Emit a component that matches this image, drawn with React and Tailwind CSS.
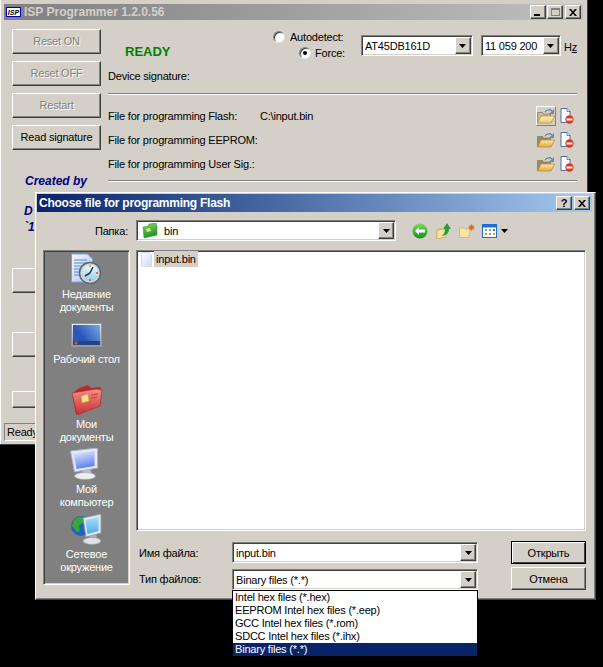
import React from 'react';

const RAISED = 'border border-t-white border-l-white border-r-[#404040] border-b-[#404040] shadow-[inset_-1px_-1px_0_#808080]';
const SUNKEN = 'border border-t-[#808080] border-l-[#808080] border-r-white border-b-white shadow-[inset_1px_1px_0_#404040,inset_-1px_-1px_0_#d4d0c8]';

const Arrow = () => (
  <svg width="7" height="4" viewBox="0 0 7 4"><path d="M0 0h7L3.5 4z" fill="#000" /></svg>
);

const Grad = ({ id, from, to, x2 = 0, y2 = 1 }) => (
  <defs>
    <linearGradient id={id} x1="0" y1="0" x2={x2} y2={y2}>
      <stop offset="0" stopColor={from} />
      <stop offset="1" stopColor={to} />
    </linearGradient>
  </defs>
);

const Combo = ({ value, className = '', children }) => (
  <div className={`relative flex items-center bg-white h-[21px] ${SUNKEN} ${className}`}>
    <span className="flex-1 pl-[3px] whitespace-nowrap">{value}</span>
    <div className={`w-[16px] h-[17px] mr-[1px] flex items-center justify-center bg-[#d4d0c8] ${RAISED}`}>
      <Arrow />
    </div>
    {children}
  </div>
);

const CtlButton = ({ className = '', children }) => (
  <div className={`w-[16px] h-[14px] flex items-center justify-center bg-[#d4d0c8] ${RAISED} ${className}`}>
    {children}
  </div>
);

const CloseGlyph = () => (
  <svg width="8" height="7" viewBox="0 0 8 7"><path d="M0 0h2l2 2.3L6 0h2L5 3.5 8 7H6L4 4.7 2 7H0l3-3.5z" fill="#000" /></svg>
);

const WinButton = ({ label, disabled, className = '' }) => (
  <div className={`w-[89px] h-[25px] pb-[1px] flex items-center justify-center bg-[#d4d0c8] ${RAISED} ${className}`}>
    <span className={disabled ? 'text-[#808080] [text-shadow:1px_1px_0_#fff]' : ''}>{label}</span>
  </div>
);

const FolderIcon = ({ pale }) => (
  <svg width="18" height="16" viewBox="0 0 18 16">
    <Grad id={pale ? 'folderPale' : 'folderGold'} from={pale ? '#fbeec4' : '#fbe9a8'} to={pale ? '#eec97a' : '#e8a93a'} />
    <path d="M0.5 4.5h5l1 1.5h7v8.5H0.5z" fill={pale ? '#c9b98c' : '#9a8a60'} stroke="#86795a" strokeWidth="0.7" />
    <path d="M4 8h13.5l-3.5 7H0.5z" fill={`url(#${pale ? 'folderPale' : 'folderGold'})`} stroke="#a88a3c" strokeWidth="0.7" />
    <path d="M8 4C10 1.500 13 1 15 3" fill="none" stroke="#6f86a8" strokeWidth="1.3" />
    <path d="M17 1v5h-5z" fill="#6f86a8" />
  </svg>
);

const NoFileIcon = () => (
  <svg width="14" height="16" viewBox="0 0 14 16">
    <path d="M1 0.500h6l3 3v11H1z" fill="#fff" stroke="#3a5f9e" strokeWidth="0.9" />
    <path d="M7 0.500v3h3" fill="#dbe6f5" stroke="#3a5f9e" strokeWidth="0.7" />
    <circle cx="9.500" cy="11.500" r="4.200" fill="#d63a1e" />
    <rect x="6.500" y="10.500" width="6" height="2" fill="#fff" />
  </svg>
);

const FileRow = ({ label, path, active }) => (
  <div className="flex items-center h-[24px]">
    <span className="w-[152px] whitespace-nowrap">{label}</span>
    <span className="flex-1">{path}</span>
    <div className={`w-[20px] h-[20px] flex items-center justify-center ${active ? 'border border-t-white border-l-white border-r-[#808080] border-b-[#808080]' : ''}`}>
      <FolderIcon pale={active} />
    </div>
    <div className="ml-[4px] mr-[3px] w-[14px] flex justify-center"><NoFileIcon /></div>
  </div>
);

const Separator = () => <div className="h-[2px] border-t border-t-[#808080] border-b border-b-white" />;

const Radio = ({ checked }) => (
  <div className="w-[12px] h-[12px] rounded-full bg-white border border-t-[#808080] border-l-[#808080] border-r-[#e8e6e0] border-b-[#e8e6e0] flex items-center justify-center shadow-[inset_1px_1px_0_#404040]">
    {checked && <div className="w-[4px] h-[4px] rounded-full bg-black" />}
  </div>
);

const RecentIcon = () => (
  <svg width="32" height="32" viewBox="0 0 32 32">
    <Grad id="recentDoc" from="#f4f8ff" to="#a9c4ee" x2={1} y2={1} />
    <Grad id="recentFace" from="#eafaff" to="#8fd0ee" />
    <path d="M0.500 1h16l5 5v23H0.500z" fill="url(#recentDoc)" stroke="#7f9fd8" />
    <path d="M3 7h13M3 10h13M3 13h11M3 16h9M3 19h6M3 22h6" stroke="#5c86d2" strokeWidth="1.100" />
    <circle cx="19" cy="20" r="10.500" fill="#cdd3d8" stroke="#5f676d" strokeWidth="1.500" />
    <circle cx="19" cy="20" r="8" fill="url(#recentFace)" />
    <path d="M19 20l-5 3M19 20l3-6" stroke="#333" strokeWidth="1.500" />
    <circle cx="26" cy="20" r="1" fill="#d8502a" />
    <circle cx="19" cy="27" r="1" fill="#d8502a" />
    <circle cx="19" cy="13" r="1" fill="#d8902a" />
  </svg>
);

const DesktopIcon = () => (
  <svg width="32" height="24" viewBox="0 0 32 24">
    <Grad id="deskFrame" from="#e8ecf4" to="#8d97ab" />
    <Grad id="deskScreen" from="#2a57b8" to="#8dbdf5" x2={1} y2={-0.5} />
    <rect x="0.500" y="0.500" width="30" height="23" fill="url(#deskFrame)" stroke="#8c97a3" />
    <rect x="2" y="2" width="27" height="17" fill="url(#deskScreen)" />
    <rect x="2" y="18" width="27" height="4" fill="#27437a" />
    <rect x="3.500" y="18.500" width="3" height="3" fill="#d8502a" />
  </svg>
);

const DocsIcon = () => (
  <svg width="32" height="30" viewBox="0 0 32 30">
    <Grad id="docsFront" from="#f48f86" to="#c92f2f" />
    <path d="M8 3l9-3 3 3 9-1 2 4-2 15-24 8L1 9z" fill="#b32b2b" />
    <path d="M1 8l24-4 6 1-2 16-23 9z" fill="url(#docsFront)" stroke="#a82a28" strokeWidth="0.600" />
    <path d="M10 11l7-2 1 7-7 2z" fill="#f7e08a" stroke="#b4942e" strokeWidth="0.500" />
    <path d="M20 10l7-1M20 13l6-1" stroke="#a83a36" strokeWidth="0.800" />
  </svg>
);

const ComputerIcon = () => (
  <svg width="32" height="32" viewBox="0 0 32 32">
    <Grad id="pcScreen" from="#eef0ff" to="#5f82f0" x2={0.3} y2={1} />
    <path d="M0.500 3l27-3v20l-23 4z" fill="#e4e8f4" stroke="#aab2c6" />
    <path d="M3.500 5.500l21-2.500v15l-18 3z" fill="url(#pcScreen)" />
    <path d="M12 23l8-2 2 5h-9z" fill="#b9bec8" />
    <ellipse cx="15" cy="28" rx="10.500" ry="3.500" fill="#eceef2" stroke="#9aa0a8" strokeWidth="0.600" />
  </svg>
);

const NetworkIcon = () => (
  <svg width="32" height="32" viewBox="0 0 32 32">
    <Grad id="netScreen" from="#a8e0fb" to="#4ea8ec" />
    <circle cx="10" cy="13" r="10" fill="#1f63bd" />
    <path d="M3 7c4-4 8-4 10-2l-1 5-4 2 1 6-3 1-5-6z" fill="#3ba53b" />
    <path d="M12 5l18-4v19l-15 4z" fill="#dfe6f0" stroke="#8c97a3" strokeWidth="0.800" />
    <path d="M14.500 7l13-3v14l-11 3z" fill="url(#netScreen)" />
    <path d="M19 23l6-2 1 5h-7z" fill="#a8adb6" />
    <ellipse cx="21" cy="28" rx="9" ry="3.500" fill="#dfe2e7" stroke="#8f959e" strokeWidth="0.600" />
  </svg>
);

const places = [
  { icon: <RecentIcon />, lines: ['Недавние', 'документы'], h: 'h-[70px]', gap: 'mt-[3px]' },
  { icon: <DesktopIcon />, lines: ['Рабочий стол'], h: 'h-[62px]', gap: 'mt-[6px]' },
  { icon: <DocsIcon />, lines: ['Мои', 'документы'], h: 'h-[63px]', gap: 'mt-[3px]' },
  { icon: <ComputerIcon />, lines: ['Мой', 'компьютер'], h: 'h-[65px]', gap: 'mt-[3px]' },
  { icon: <NetworkIcon />, lines: ['Сетевое', 'окружение'], h: 'h-[66px]', gap: 'mt-[3px]' },
];

const fileTypes = [
  'Intel hex files (*.hex)',
  'EEPROM Intel hex files (*.eep)',
  'GCC Intel hex files (*.rom)',
  'SDCC Intel hex files (*.ihx)',
  'Binary files (*.*)',
];

const MainWindow = () => (
  <div className="absolute left-0 top-0 w-[588px] h-[445px] bg-[#d4d0c8] p-[4px] border-r border-b border-r-[#404040] border-b-[#404040] shadow-[inset_1px_0_0_#fff]">
    <div className="h-[16px] flex items-center bg-gradient-to-r from-[#808080] to-[#c0c0c0] pl-[2px] pr-[2px]">
      <div className="w-[15px] h-[10px] bg-white border border-[#0000c0] flex items-center justify-center">
        <span className="text-[7px] leading-none font-bold italic tracking-normal text-black">ISP</span>
      </div>
      <span className="ml-[3px] flex-1 font-bold text-[#d4d0c8] text-[12px] tracking-normal">ISP Programmer 1.2.0.56</span>
      <CtlButton>
        <div className="w-[6px] h-[2px] bg-black mt-[6px] mr-[2px]" />
      </CtlButton>
      <CtlButton className="ml-[1px]">
        <div className="w-[9px] h-[8px] border border-t-2 border-[#808080]" />
      </CtlButton>
      <CtlButton className="ml-[2px]"><CloseGlyph /></CtlButton>
    </div>

    <div className="flex">
      <div className="w-[104px] pl-[8px] pt-[9px] flex flex-col">
        <div className="flex flex-col gap-[7px]">
          <WinButton label="Reset ON" disabled />
          <WinButton label="Reset OFF" disabled />
          <WinButton label="Restart" disabled />
          <WinButton label="Read signature" />
        </div>
        <div className="mt-[23px] ml-[13px] font-bold italic text-[#000080] text-[12px] leading-[16px] tracking-normal">Created by</div>
        <div className="mt-[14px] ml-[12px] font-bold italic text-[#000080] text-[12px] leading-[16px] tracking-normal">D</div>
        <div className="ml-[12px] font-bold italic text-[#000080] text-[12px] leading-[16px] tracking-normal">`1</div>
        <div className={`mt-[33px] w-[89px] h-[25px] bg-[#d4d0c8] ${RAISED}`} />
        <div className={`mt-[39px] w-[89px] h-[25px] bg-[#d4d0c8] ${RAISED}`} />
        <div className={`mt-[34px] w-[89px] h-[17px] bg-[#d4d0c8] ${RAISED}`} />
      </div>

      <div className="w-[469px] pt-[9px]">
        <div className="flex h-[33px]">
          <div className="w-[165px] pl-[17px] pt-[15px] text-[#008000] font-bold text-[13px] leading-[16px] tracking-normal">READY</div>
          <div className="w-[88px] flex flex-col">
            <div className="flex items-center gap-[5px] h-[16px]">
              <Radio />
              <span>Autodetect:</span>
            </div>
            <div className="flex items-center gap-[4px] h-[16px] ml-[26px]">
              <Radio checked />
              <span>Force:</span>
            </div>
          </div>
          <Combo value="AT45DB161D" className="w-[112px] mt-[6px]" />
          <Combo value="11 059 200" className="w-[80px] ml-[8px] mt-[6px]" />
          <span className="ml-[3px] mt-[11px]">H<span className="underline">z</span></span>
        </div>
        <div className="mt-[6px] h-[16px] flex items-center">Device signature:</div>
        <div className="mt-[9px]"><Separator /></div>
        <div className="mt-[9px] flex flex-col">
          <FileRow label="File for programming Flash:" path="C:\input.bin" active />
          <FileRow label="File for programming EEPROM:" />
          <FileRow label="File for programming User Sig.:" />
        </div>
        <div className="mt-[4px]"><Separator /></div>
      </div>
    </div>

    <div className="absolute left-[4px] top-[423px] w-[300px] h-[18px] flex items-center pl-[2px] border border-t-[#808080] border-l-[#808080] border-r-white border-b-white">Ready</div>
  </div>
);

const FileDialog = () => (
  <div className="absolute left-[35px] top-[192px] w-[561px] h-[408px] bg-[#d4d0c8] pt-[1px] pl-[1px] pr-[3px] border border-t-white border-l-white border-r-[#404040] border-b-[#404040] shadow-[inset_-1px_-1px_0_#808080]">
    <div className="h-[18px] flex items-center bg-gradient-to-r from-[#0a246a] to-[#a6caf0] pl-[2px] pr-[2px]">
      <span className="flex-1 font-bold text-white text-[12px] tracking-[-0.25px]">Choose file for programming Flash</span>
      <CtlButton>
        <span className="font-bold text-[11px] leading-none">?</span>
      </CtlButton>
      <CtlButton className="ml-[2px]"><CloseGlyph /></CtlButton>
    </div>

    <div className="flex items-center mt-[8px] h-[21px]">
      <span className="w-[91px] text-right">Папка:</span>
      <Combo value={(
        <span className="flex items-center gap-[6px] pl-[2px]">
          <svg width="16" height="16" viewBox="0 0 16 16">
            <Grad id="binFolder" from="#8fdc5c" to="#1f8f2a" x2={0.3} y2={1} />
            <path d="M1 4l5-1 1-2 7-1 1 3v9l-13 3z" fill="url(#binFolder)" stroke="#2a8a2a" strokeWidth="0.500" />
            <path d="M4 6l4-1 1 3-4 1z" fill="#d8e88a" />
          </svg>
          bin
        </span>
      )} className="ml-[8px] w-[260px]" />
      <div className="ml-[16px] flex items-center">
        <svg width="16" height="16" viewBox="0 0 16 16">
          <Grad id="backBall" from="#7fdc5a" to="#0f8f1f" />
          <circle cx="8" cy="8" r="7.500" fill="url(#backBall)" />
          <path d="M3 8l4-4v2.500h6v3H7V12z" fill="#fff" />
        </svg>
        <svg className="ml-[8px]" width="15" height="16" viewBox="0 0 15 16">
          <path d="M0.500 6l5-1v9l-5 2z" fill="#d8b85c" />
          <path d="M1 7l9-1v8l-9 2z" fill="#f7e6a2" stroke="#c9a44e" strokeWidth="0.700" />
          <path d="M5 13c3-1 4-4 4-7H7l4-6 4 6h-2c0 4-3 7-8 7z" fill="#2f9b35" />
        </svg>
        <svg className="ml-[8px]" width="16" height="14" viewBox="0 0 16 14">
          <path d="M0.500 4h5l1 1h5l-2 8.500H0.500z" fill="#f7e6a2" stroke="#d0ac56" strokeWidth="0.700" />
          <circle cx="12.500" cy="3.500" r="2.300" fill="#e8622a" />
          <path d="M12.500 0v7M9 3.500h7M10 1l5 5M15 1l-5 5" stroke="#e8622a" strokeWidth="0.600" />
        </svg>
        <svg className="ml-[7px]" width="15" height="14" viewBox="0 0 15 14">
          <rect x="0.500" y="0.500" width="14" height="13" fill="#fff" stroke="#1c6fd6" />
          <rect x="0.500" y="0.500" width="14" height="3" fill="#1c6fd6" />
          <rect x="3" y="5" width="2" height="2" fill="#8a9ac0" />
          <rect x="7" y="5" width="2" height="2" fill="#8a9ac0" />
          <rect x="11" y="5" width="2" height="2" fill="#2f9b35" />
          <rect x="3" y="9" width="2" height="2" fill="#e8882a" />
          <rect x="7" y="9" width="2" height="2" fill="#8a9ac0" />
          <rect x="11" y="9" width="2" height="2" fill="#e8a02a" />
        </svg>
        <div className="ml-[4px]"><Arrow /></div>
      </div>
    </div>

    <div className="flex mt-[9px] pl-[6px]">
      <div className={`w-[87px] h-[335px] bg-[#808080] flex flex-col items-center pt-[2px] text-white ${SUNKEN}`}>
        {places.map(item => (
          <div key={item.lines[0]} className={`flex flex-col items-center ${item.h}`}>
            {item.icon}
            <div className={`${item.gap} text-center leading-[13px]`}>
              {item.lines.map(line => <div key={line}>{line}</div>)}
            </div>
          </div>
        ))}
      </div>

      <div className="ml-[6px] w-[450px]">
        <div className={`h-[281px] bg-white px-[4px] ${SUNKEN}`}>
          <div className="flex items-center h-[16px]">
            <svg width="12" height="15" viewBox="0 0 12 15">
              <Grad id="binFile" from="#ffffff" to="#c8daf4" x2={1} y2={1} />
              <path d="M0.500 0.500h8l2 2v12h-10z" fill="url(#binFile)" stroke="#cfdcf0" />
            </svg>
            <span className="ml-[1px] px-[2px] h-[16px] flex items-center bg-[#d4d0c8]">input.bin</span>
          </div>
        </div>

        <div className="flex mt-[10px]">
          <div className="w-[96px] pl-[3px] flex flex-col">
            <span className="h-[21px] mt-[1px] flex items-center">Имя файла:</span>
            <span className="h-[21px] mt-[5px] flex items-center">Тип файлов:</span>
          </div>
          <div className="w-[246px] flex flex-col gap-[6px] pt-[1px]">
            <Combo value="input.bin" />
            <Combo value="Binary files (*.*)">
              <div className="absolute left-[-1px] top-[20px] w-[246px] h-[67px] bg-white border border-black flex flex-col">
                {fileTypes.map(type => (
                  <div key={type} className={`h-[13px] pl-[2px] leading-[13px] whitespace-nowrap ${type.startsWith('Binary') ? 'bg-[#0a246a] text-white' : 'text-black'}`}>{type}</div>
                ))}
              </div>
            </Combo>
          </div>
          <div className="ml-[33px] flex flex-col">
            <div className="w-[75px] h-[23px] flex items-center justify-center bg-[#d4d0c8] border border-black shadow-[inset_1px_1px_0_#fff,inset_-1px_-1px_0_#404040]">Открыть</div>
            <div className={`mt-[3px] w-[75px] h-[23px] flex items-center justify-center bg-[#d4d0c8] ${RAISED}`}>Отмена</div>
          </div>
        </div>
      </div>
    </div>
  </div>
);

export default function App() {
  return (
    <div className="relative w-[603px] h-[667px] bg-black overflow-hidden font-['Liberation_Sans',Arial,sans-serif] text-[11px] leading-[14px] tracking-[-0.2px] text-black">
      <MainWindow />
      <FileDialog />
    </div>
  );
}
